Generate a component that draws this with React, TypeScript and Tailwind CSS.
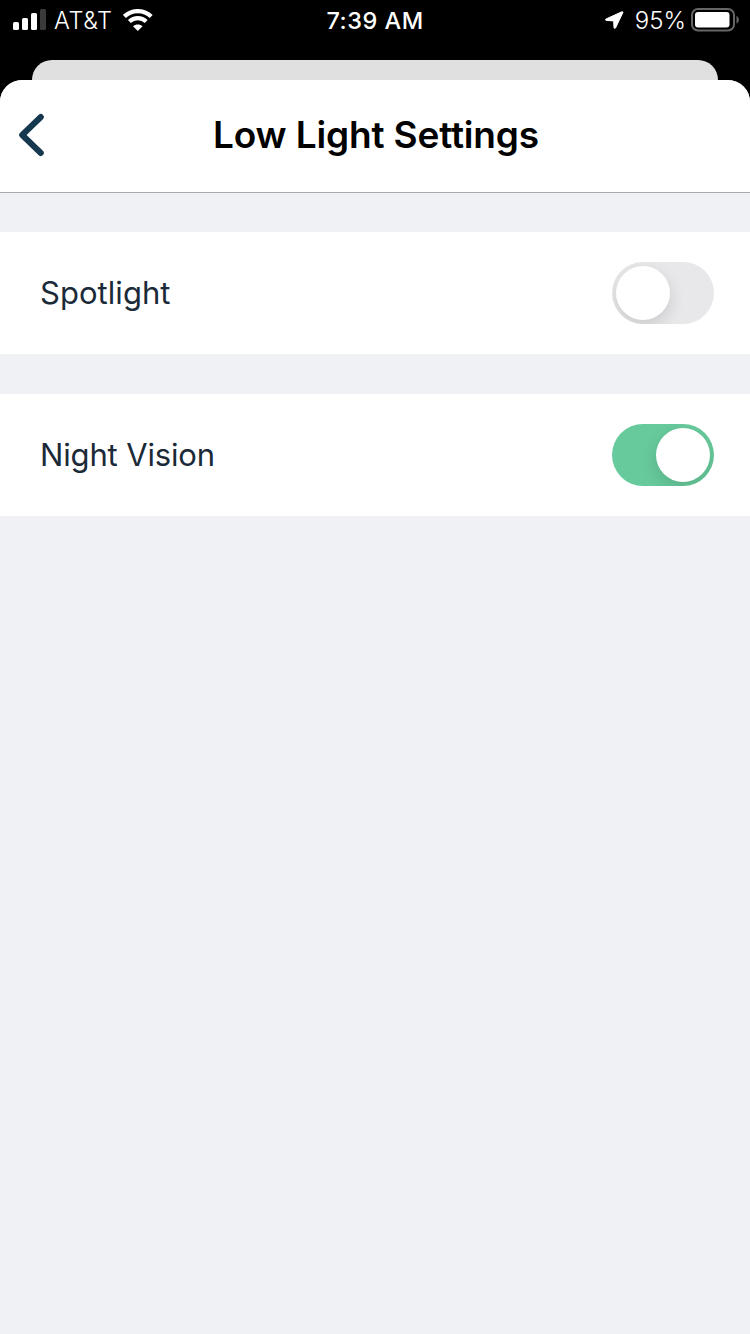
import { useState } from 'react';

interface ToggleProps {
  label: string;
  checked: boolean;
  onChange: (checked: boolean) => void;
}

function Toggle({ label, checked, onChange }: ToggleProps) {
  return (
    <button
      role="switch"
      aria-checked={checked}
      aria-label={label}
      onClick={() => onChange(!checked)}
      className={`flex h-[62px] w-[102px] items-center overflow-hidden rounded-full p-1 ${
        checked ? 'justify-end bg-[#67ca9c]' : 'justify-start bg-[#e8e8ea]'
      }`}
    >
      <span className="size-[54px] rounded-full bg-white shadow-[0_6px_16px_rgba(0,0,0,0.13)]" />
    </button>
  );
}

interface SettingRowProps extends ToggleProps {
  labelClassName: string;
}

function SettingRow({ label, labelClassName, checked, onChange }: SettingRowProps) {
  return (
    <div className="flex h-[122px] items-center justify-between bg-white pr-9 pl-10">
      <span className={`text-[31px] leading-[40px] text-[#1b2a38] ${labelClassName}`}>{label}</span>
      <Toggle label={label} checked={checked} onChange={onChange} />
    </div>
  );
}

function StatusBar() {
  return (
    <div className="grid h-10 grid-cols-3 items-center text-[24px] leading-[38px] text-white">
      <div className="flex items-center pl-[13px]">
        <SignalIcon />
        <span className="ml-2 w-[60px] pt-[2px] text-[23.5px] font-[350] whitespace-nowrap tracking-[0.6px]">AT&amp;T</span>
        <WifiIcon />
      </div>
      <span className="pt-[2px] text-center text-[23.5px] font-[550] tracking-[0.5px]">7:39 AM</span>
      <div className="flex items-center justify-end pr-[11px]">
        <LocationIcon />
        <span className="mr-[5px] ml-[10px] pt-[2px] font-[350]">95%</span>
        <BatteryIcon />
      </div>
    </div>
  );
}

export default function App() {
  const [spotlight, setSpotlight] = useState(false);
  const [nightVision, setNightVision] = useState(true);

  return (
    <div className="flex h-[1334px] w-[750px] flex-col overflow-hidden bg-black font-['Inter',sans-serif]">
      <StatusBar />

      {/* Sheet behind the current one */}
      <div className="mx-8 mt-5 h-5 shrink-0 rounded-t-[20px] bg-[#e0e0e0]" />

      <div className="flex flex-1 flex-col overflow-hidden rounded-t-[22px] bg-[#eff1f5]">
        {/* Header */}
        <header className="grid h-[113px] grid-cols-[60px_1fr_60px] items-center border-b border-[#a9a9ab] bg-white pb-[2px]">
          <button aria-label="Back" className="pl-[18px]">
            <BackIcon />
          </button>
          <h1 className="pl-[2px] text-center text-[37px] leading-[48px] font-semibold tracking-[-0.15px] text-black">
            Low Light Settings
          </h1>
        </header>

        {/* Settings */}
        <div className="flex flex-col gap-10 pt-[39px]">
          <SettingRow label="Spotlight" labelClassName="tracking-[0.05px]" checked={spotlight} onChange={setSpotlight} />
          <SettingRow label="Night Vision" labelClassName="tracking-[-0.15px]" checked={nightVision} onChange={setNightVision} />
        </div>
      </div>
    </div>
  );
}

function BackIcon() {
  return (
    <svg className="h-[44px] w-[28px]" viewBox="0 0 28 44" fill="none">
      <path d="M22.8 4L4.2 22L22.8 40" stroke="#16384f" strokeWidth="6" strokeLinecap="round" strokeLinejoin="round" />
    </svg>
  );
}

function SignalIcon() {
  return (
    <svg className="h-[22px] w-[33px]" viewBox="0 0 33 22" fill="white">
      <rect x="0" y="13" width="6" height="8" rx="1.5" />
      <rect x="9" y="9" width="6" height="12" rx="1.5" />
      <rect x="18" y="4" width="6" height="17" rx="1.5" />
      <rect x="27" y="0" width="6" height="21" rx="1.5" fill="#3a3a3a" />
    </svg>
  );
}

function WifiIcon() {
  return (
    <svg className="ml-[9px] h-[22px] w-[30px]" viewBox="0 0 30 22">
      <path d="M1.4 7.4C8.8 0.3 20.8 0.3 28.2 7.4" fill="none" stroke="white" strokeWidth="4.2" />
      <path d="M6.4 12.5C11.1 8.1 18.5 8.1 23.2 12.5" fill="none" stroke="white" strokeWidth="4.2" />
      <path d="M14.8 22L10 17.2C12.7 14.9 16.9 14.9 19.6 17.2Z" fill="white" />
    </svg>
  );
}

function LocationIcon() {
  return (
    <svg className="mr-px h-[18px] w-[19px]" viewBox="0 0 19 18" fill="white">
      <path
        d="M16.8 0.8L1 8C0.2 8.4 0.4 9.3 1.2 9.4L8 9.9C8.4 9.9 8.7 10.2 8.7 10.6L9 16.6C9.1 17.6 10.2 17.7 10.6 16.8L17.8 1.7C18.1 0.9 17.6 0.5 16.8 0.8Z"
        stroke="white"
        strokeWidth="1"
      />
    </svg>
  );
}

function BatteryIcon() {
  return (
    <svg className="h-[24px] w-[48px]" viewBox="0 0 48 24">
      <rect x="1" y="1" width="42" height="21.5" rx="6" fill="none" stroke="#666666" strokeWidth="2" />
      <rect x="4" y="4" width="34.5" height="15.5" rx="3" fill="white" />
      <path d="M45.5 8C48.6 9 48.6 14.5 45.5 15.5Z" fill="#666666" />
    </svg>
  );
}
